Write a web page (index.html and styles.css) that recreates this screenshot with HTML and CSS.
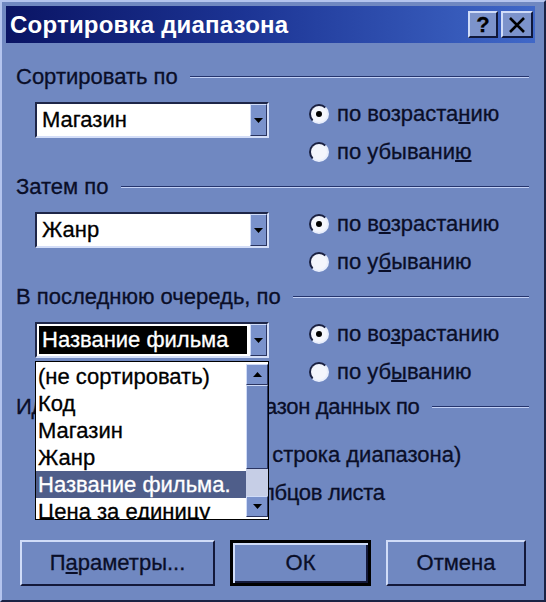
FILE: index.html
```html
<!DOCTYPE html>
<html lang="ru">
<head>
<meta charset="utf-8">
<title>Сортировка диапазона</title>
<link rel="stylesheet" href="styles.css">
</head>
<body>
<div class="window">
  <div class="titlebar">
    <span class="title">Сортировка диапазона</span>
    <div class="caption-btns">
      <span class="cap-btn help">?</span>
      <span class="cap-btn close"><svg width="18" height="16" viewBox="0 0 18 16"><path d="M2 1 L16 15 M16 1 L2 15" stroke="#000" stroke-width="2.6" fill="none"/></svg></span>
    </div>
  </div>
  <div class="content">
    <section class="group">
      <div class="ghead"><span>Сортировать по</span><i class="etch"></i></div>
      <div class="gbody">
        <div class="combo"><span class="ctext">Магазин</span><span class="drop"><svg width="9" height="5" viewBox="0 0 9 5"><path d="M0 0 H9 L4.5 5 Z" fill="#000"/></svg></span></div>
        <div class="radios">
          <div class="radio"><span class="dot on"></span><span>по возраста<u>н</u>ию</span></div>
          <div class="radio"><span class="dot"></span><span>по убывани<u>ю</u></span></div>
        </div>
      </div>
    </section>
    <section class="group">
      <div class="ghead"><span>Затем по</span><i class="etch"></i></div>
      <div class="gbody">
        <div class="combo"><span class="ctext">Жанр</span><span class="drop"><svg width="9" height="5" viewBox="0 0 9 5"><path d="M0 0 H9 L4.5 5 Z" fill="#000"/></svg></span></div>
        <div class="radios">
          <div class="radio"><span class="dot on"></span><span>по в<u>о</u>зрастанию</span></div>
          <div class="radio"><span class="dot"></span><span>по у<u>б</u>ыванию</span></div>
        </div>
      </div>
    </section>
    <section class="group">
      <div class="ghead"><span>В последнюю очередь, по</span><i class="etch"></i></div>
      <div class="gbody">
        <div class="combo"><span class="ctext sel">Название фильма</span><span class="drop"><svg width="9" height="5" viewBox="0 0 9 5"><path d="M0 0 H9 L4.5 5 Z" fill="#000"/></svg></span></div>
        <div class="radios">
          <div class="radio"><span class="dot on"></span><span>по во<u>з</u>растанию</span></div>
          <div class="radio"><span class="dot"></span><span>по уб<u>ы</u>ванию</span></div>
        </div>
      </div>
    </section>
    <section class="group">
      <div class="ghead"><span class="tight">Идентифицировать диапазон данных по</span><i class="etch"></i></div>
      <div class="gbody last">
        <div class="radios wide">
          <div class="radio"><span class="dot on"></span><span>подписям (первая строка диапазона)</span></div>
          <div class="radio"><span class="dot"></span><span class="tight">обозначениям столбцов листа</span></div>
        </div>
      </div>
    </section>
    <div class="buttons">
      <button class="btn params">П<u>а</u>раметры...</button>
      <button class="btn ok">ОК</button>
      <button class="btn cancel">Отмена</button>
    </div>

    <div class="droplist">
      <ul class="items">
        <li>(не сортировать)</li>
        <li>Код</li>
        <li>Магазин</li>
        <li>Жанр</li>
        <li class="hl">Название фильма.</li>
        <li>Цена за единицу</li>
      </ul>
      <div class="scrollbar">
        <span class="sbtn"><svg width="9" height="5" viewBox="0 0 9 5"><path d="M0 5 H9 L4.5 0 Z" fill="#000"/></svg></span>
        <span class="thumb"></span>
        <span class="track"></span>
        <span class="sbtn"><svg width="9" height="5" viewBox="0 0 9 5"><path d="M0 0 H9 L4.5 5 Z" fill="#000"/></svg></span>
      </div>
    </div>
  </div>
</div>
</body>
</html>
```

FILE: styles.css
```css
html, body {
  margin: 0;
  padding: 0;
}
body {
  background: #7088c1;
  font-family: "Liberation Sans", Arial, sans-serif;
  color: #0a0e28;
  -webkit-text-stroke: 0.3px currentColor;
}
.window {
  width: 546px;
  height: 602px;
  box-sizing: border-box;
  border: 2px solid;
  border-color: #b4c4ee #1a2244 #1a2244 #b4c4ee;
  padding: 4px 9px 0 4px;
  background: #7088c1;
  overflow: hidden;
}
.titlebar {
  height: 37px;
  display: flex;
  align-items: center;
  justify-content: space-between;
  padding-left: 4px;
  background: linear-gradient(to right, #0a1464 0%, #1c3494 45%, #4068c8 100%);
}
.title {
  color: #fff;
  font-weight: bold;
  font-size: 24px;
  letter-spacing: 0.2px;
  -webkit-text-stroke: 0;
}
.caption-btns {
  display: flex;
  gap: 3px;
  padding-right: 2px;
}
.cap-btn {
  width: 30px;
  height: 27px;
  box-sizing: border-box;
  display: flex;
  align-items: center;
  justify-content: center;
  background: #7c93cb;
  border: 2px solid;
  border-color: #d0dcf8 #10183a #10183a #d0dcf8;
  font-weight: bold;
  font-size: 22px;
  color: #000;
}
.cap-btn.close { width: 32px; }

.content {
  position: relative;
  padding: 22px 6px 0 10px;
}
.group + .group { margin-top: 4px; }
.ghead {
  height: 24px;
  display: flex;
  align-items: center;
  font-size: 22px;
  white-space: nowrap;
}
.tight { letter-spacing: -0.3px; }
.etch {
  flex: 1;
  height: 0;
  margin-left: 12px;
  border-top: 1px solid #24346c;
  border-bottom: 1px solid #c4d2f6;
}
.gbody {
  margin-top: 6px;
  height: 76px;
  display: flex;
  align-items: flex-start;
  padding-left: 19px;
}
.gbody.last {
  margin-top: 17px;
  padding-left: 38px;
}
.combo {
  margin-top: 7px;
  width: 234px;
  height: 36px;
  box-sizing: border-box;
  border: 2px solid;
  border-color: #1e2648 #d4def8 #d4def8 #1e2648;
  background: #fff;
  display: flex;
  align-items: stretch;
}
.ctext {
  flex: 1;
  font-size: 22px;
  line-height: 32px;
  padding-left: 5px;
  color: #000;
}
.ctext.sel {
  margin: 2px 3px 2px 2px;
  padding-left: 3px;
  line-height: 28px;
  background: #000;
  color: #fff;
}
.drop {
  width: 17px;
  box-sizing: border-box;
  background: #7a92cc;
  border: 1px solid;
  border-color: #d0dcf8 #2a3460 #2a3460 #d0dcf8;
  display: flex;
  align-items: center;
  justify-content: center;
}
.radios {
  margin-left: 40px;
  display: flex;
  flex-direction: column;
}
.radios.wide { margin-left: 0; }
.radio {
  height: 38px;
  display: flex;
  align-items: center;
  gap: 8px;
  font-size: 22px;
  white-space: nowrap;
}
.radio u { text-decoration-thickness: 2px; }
.dot {
  width: 20px;
  height: 20px;
  box-sizing: border-box;
  border-radius: 50%;
  border: 2px solid;
  border-color: #1a2040 #e8eefc #e8eefc #1a2040;
  background: #f4f6fc;
  display: flex;
  align-items: center;
  justify-content: center;
  flex: none;
}
.dot.on::after {
  content: "";
  width: 6px;
  height: 6px;
  border-radius: 50%;
  background: #000;
}

.buttons {
  margin-top: 28px;
  display: flex;
  padding-left: 4px;
}
.btn {
  height: 46px;
  box-sizing: border-box;
  background: #7088c1;
  border: 2px solid;
  border-color: #d0dcf8 #14193a #14193a #d0dcf8;
  font-family: "Liberation Sans", Arial, sans-serif;
  font-size: 22px;
  color: #0a0e28;
  -webkit-text-stroke: 0.3px #0a0e28;
  padding: 0;
}
.btn.params { width: 195px; }
.btn.ok {
  width: 141px;
  margin-left: 15px;
  border: 3px solid #000;
  box-shadow: inset 2px 2px 0 #d0dcf8, inset -2px -2px 0 #14193a;
}
.btn.cancel {
  width: 140px;
  margin-left: 15px;
}

.droplist {
  position: absolute;
  left: 29px;
  top: 318px;
  width: 234px;
  height: 159px;
  box-sizing: border-box;
  border: 1px solid #000;
  background: #fff;
  display: flex;
  overflow: hidden;
}
.items {
  list-style: none;
  margin: 0;
  padding: 1px 0 0 0;
  flex: 1;
  min-width: 0;
}
.items li {
  height: 27px;
  line-height: 27px;
  font-size: 22px;
  padding-left: 2px;
  color: #000;
  white-space: nowrap;
  overflow: hidden;
}
.items li.hl {
  background: #4f5e8a;
  color: #fff;
}
.scrollbar {
  width: 22px;
  flex: none;
  display: flex;
  flex-direction: column;
  padding-top: 2px;
}
.sbtn {
  height: 21px;
  box-sizing: border-box;
  background: #7a92cc;
  border: 1px solid;
  border-color: #d0dcf8 #2a3460 #2a3460 #d0dcf8;
  display: flex;
  align-items: center;
  justify-content: center;
}
.thumb {
  height: 84px;
  box-sizing: border-box;
  background: #7088c1;
  border: 1px solid;
  border-color: #d0dcf8 #2a3460 #2a3460 #d0dcf8;
}
.track {
  height: 27px;
  background: #c6cee6;
}
```
